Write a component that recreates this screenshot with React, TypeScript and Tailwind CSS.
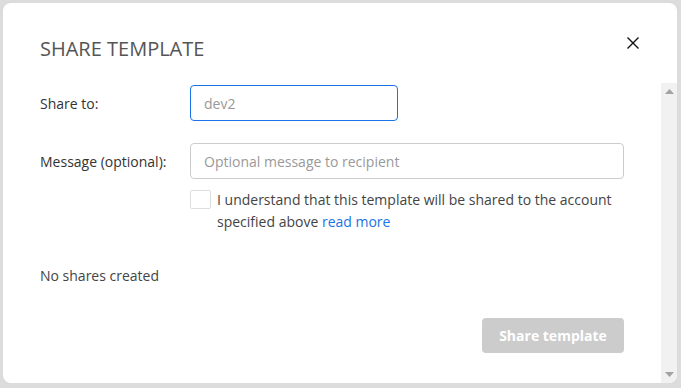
import React from "react";

export default function App() {
  return (
    <div
      className="w-[681px] h-[388px] bg-[#dcdcdc] pt-[3px] pl-[3px] pr-[4px] pb-[5px]"
      style={{ fontFamily: '"Open Sans", "Liberation Sans", sans-serif' }}
    >
      <div className="w-full h-full bg-white rounded-[8px] overflow-hidden flex flex-col">
        <div className="h-[80px] flex items-start justify-between pl-[37px] pr-[38px] pt-[32px]">
          <h1 className="text-[20px] leading-[28px] text-[#555] font-normal">SHARE TEMPLATE</h1>
          <button className="mt-[2px] w-[12px] h-[12px] flex items-center justify-center" aria-label="Close">
            <svg width="12" height="12" viewBox="0 0 12 12">
              <path d="M0.5 0.5 L11.5 11.5 M11.5 0.5 L0.5 11.5" stroke="#111" strokeWidth="1.4" />
            </svg>
          </button>
        </div>
        <div className="flex-1 flex min-h-0">
          <div className="flex-1 pl-[37px] pr-[37px] pt-[2px] text-[14px] text-[#333]">
            <div className="flex items-center h-[36px]">
              <label className="w-[150px]">Share to:</label>
              <div className="w-[208px] h-[36px] border border-[#1a73e8] rounded-[4px] flex items-center pl-[13px] text-[#999]">
                dev2
              </div>
            </div>
            <div className="flex items-center h-[36px] mt-[22px]">
              <label className="w-[150px]">Message (optional):</label>
              <div className="flex-1 h-[36px] border border-[#ccc] rounded-[4px] flex items-center pl-[13px] text-[#999]">
                Optional message to recipient
              </div>
            </div>
            <div className="flex items-start mt-[10px] pl-[150px]">
              <div className="w-[21px] h-[19px] mt-[1px] border border-[#ddd] rounded-[2px] shrink-0" />
              <p className="ml-[6px] leading-[22px] text-[#444]">
                I understand that this template will be shared to the account specified above{" "}
                <a className="text-[#1a73e8]">read more</a>
              </p>
            </div>
            <p className="mt-[32px] leading-[22px] text-[#444]">No shares created</p>
            <div className="flex justify-end mt-[31px]">
              <button className="w-[142px] h-[35px] bg-[#cccccc] rounded-[4px] text-white font-bold text-[14px]">
                Share template
              </button>
            </div>
          </div>
          <div className="w-[16px] bg-[#f1f1f1] flex flex-col items-center justify-between py-[6px]">
            <svg width="9" height="5" viewBox="0 0 9 5"><path d="M4.5 0 L9 5 L0 5 Z" fill="#a3a3a3" /></svg>
            <svg width="9" height="5" viewBox="0 0 9 5"><path d="M0 0 L9 0 L4.5 5 Z" fill="#a3a3a3" /></svg>
          </div>
        </div>
      </div>
    </div>
  );
}
